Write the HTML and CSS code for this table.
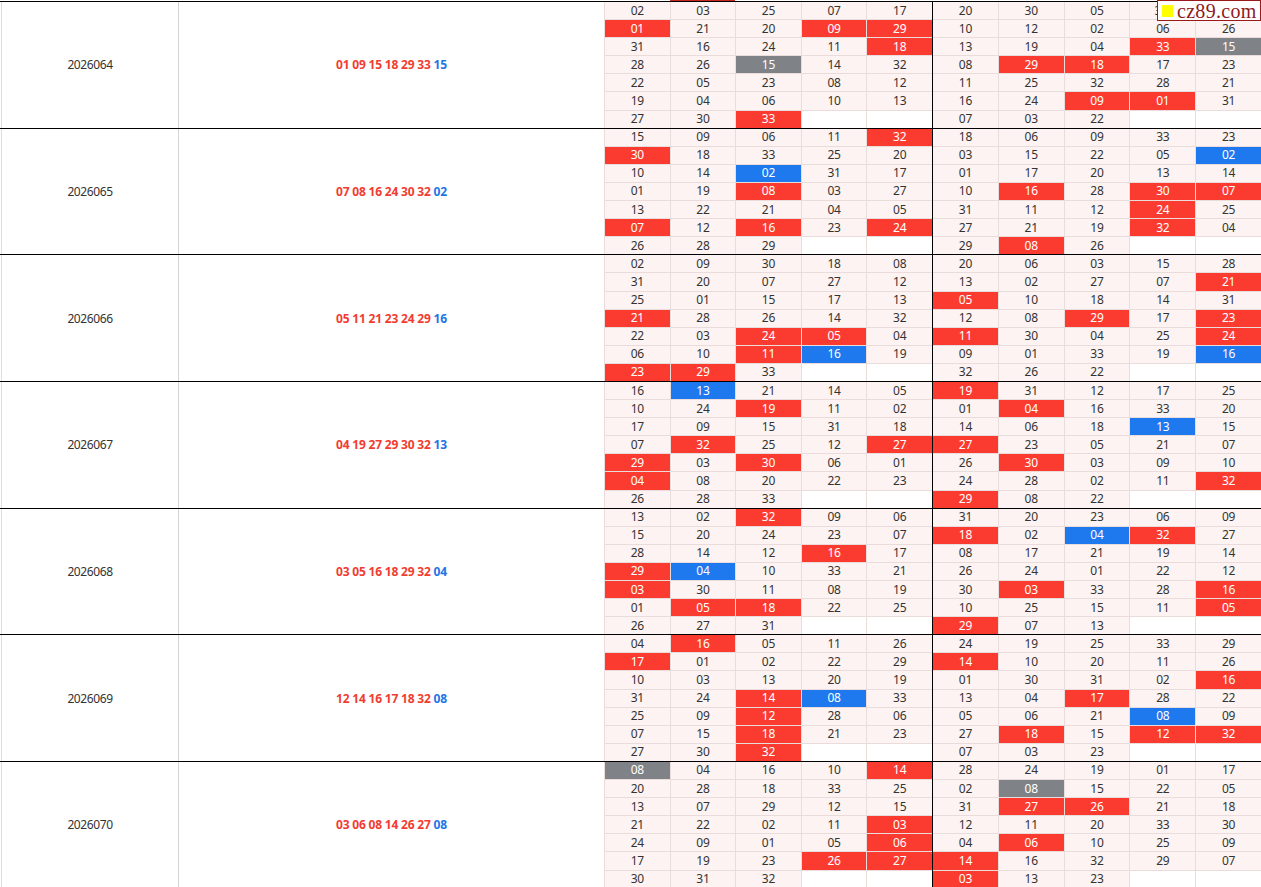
FILE: index.html
```html
<!DOCTYPE html>
<html lang="zh">
<head>
<meta charset="utf-8">
<title>cz89</title>
<link rel="stylesheet" href="styles.css">
</head>
<body>
<div class="wm"><span class="sq"></span><span class="wm-text">cz89.com</span></div>
<div class="table">
  <div class="peek"><span class="peek-gap"></span><span class="peek-red"></span></div>

  <div class="group">
    <div class="issue">2026064</div>
    <div class="draw">01 09 15 18 29 33 <span class="blue">15</span></div>
    <div class="half">
      <span>02</span><span>03</span><span>25</span><span>07</span><span>17</span>
      <span class="r">01</span><span>21</span><span>20</span><span class="r">09</span><span class="r">29</span>
      <span>31</span><span>16</span><span>24</span><span>11</span><span class="r">18</span>
      <span>28</span><span>26</span><span class="g">15</span><span>14</span><span>32</span>
      <span>22</span><span>05</span><span>23</span><span>08</span><span>12</span>
      <span>19</span><span>04</span><span>06</span><span>10</span><span>13</span>
      <span>27</span><span>30</span><span class="r">33</span><span class="e"></span><span class="e"></span>
    </div>
    <div class="half right">
      <span>20</span><span>30</span><span>05</span><span class="under">3</span><span></span>
      <span>10</span><span>12</span><span>02</span><span>06</span><span>26</span>
      <span>13</span><span>19</span><span>04</span><span class="r">33</span><span class="g">15</span>
      <span>08</span><span class="r">29</span><span class="r">18</span><span>17</span><span>23</span>
      <span>11</span><span>25</span><span>32</span><span>28</span><span>21</span>
      <span>16</span><span>24</span><span class="r">09</span><span class="r">01</span><span>31</span>
      <span>07</span><span>03</span><span>22</span><span class="e"></span><span class="e"></span>
    </div>
  </div>

  <div class="group">
    <div class="issue">2026065</div>
    <div class="draw">07 08 16 24 30 32 <span class="blue">02</span></div>
    <div class="half">
      <span>15</span><span>09</span><span>06</span><span>11</span><span class="r">32</span>
      <span class="r">30</span><span>18</span><span>33</span><span>25</span><span>20</span>
      <span>10</span><span>14</span><span class="b">02</span><span>31</span><span>17</span>
      <span>01</span><span>19</span><span class="r">08</span><span>03</span><span>27</span>
      <span>13</span><span>22</span><span>21</span><span>04</span><span>05</span>
      <span class="r">07</span><span>12</span><span class="r">16</span><span>23</span><span class="r">24</span>
      <span>26</span><span>28</span><span>29</span><span class="e"></span><span class="e"></span>
    </div>
    <div class="half right">
      <span>18</span><span>06</span><span>09</span><span>33</span><span>23</span>
      <span>03</span><span>15</span><span>22</span><span>05</span><span class="b">02</span>
      <span>01</span><span>17</span><span>20</span><span>13</span><span>14</span>
      <span>10</span><span class="r">16</span><span>28</span><span class="r">30</span><span class="r">07</span>
      <span>31</span><span>11</span><span>12</span><span class="r">24</span><span>25</span>
      <span>27</span><span>21</span><span>19</span><span class="r">32</span><span>04</span>
      <span>29</span><span class="r">08</span><span>26</span><span class="e"></span><span class="e"></span>
    </div>
  </div>

  <div class="group">
    <div class="issue">2026066</div>
    <div class="draw">05 11 21 23 24 29 <span class="blue">16</span></div>
    <div class="half">
      <span>02</span><span>09</span><span>30</span><span>18</span><span>08</span>
      <span>31</span><span>20</span><span>07</span><span>27</span><span>12</span>
      <span>25</span><span>01</span><span>15</span><span>17</span><span>13</span>
      <span class="r">21</span><span>28</span><span>26</span><span>14</span><span>32</span>
      <span>22</span><span>03</span><span class="r">24</span><span class="r">05</span><span>04</span>
      <span>06</span><span>10</span><span class="r">11</span><span class="b">16</span><span>19</span>
      <span class="r">23</span><span class="r">29</span><span>33</span><span class="e"></span><span class="e"></span>
    </div>
    <div class="half right">
      <span>20</span><span>06</span><span>03</span><span>15</span><span>28</span>
      <span>13</span><span>02</span><span>27</span><span>07</span><span class="r">21</span>
      <span class="r">05</span><span>10</span><span>18</span><span>14</span><span>31</span>
      <span>12</span><span>08</span><span class="r">29</span><span>17</span><span class="r">23</span>
      <span class="r">11</span><span>30</span><span>04</span><span>25</span><span class="r">24</span>
      <span>09</span><span>01</span><span>33</span><span>19</span><span class="b">16</span>
      <span>32</span><span>26</span><span>22</span><span class="e"></span><span class="e"></span>
    </div>
  </div>

  <div class="group">
    <div class="issue">2026067</div>
    <div class="draw">04 19 27 29 30 32 <span class="blue">13</span></div>
    <div class="half">
      <span>16</span><span class="b">13</span><span>21</span><span>14</span><span>05</span>
      <span>10</span><span>24</span><span class="r">19</span><span>11</span><span>02</span>
      <span>17</span><span>09</span><span>15</span><span>31</span><span>18</span>
      <span>07</span><span class="r">32</span><span>25</span><span>12</span><span class="r">27</span>
      <span class="r">29</span><span>03</span><span class="r">30</span><span>06</span><span>01</span>
      <span class="r">04</span><span>08</span><span>20</span><span>22</span><span>23</span>
      <span>26</span><span>28</span><span>33</span><span class="e"></span><span class="e"></span>
    </div>
    <div class="half right">
      <span class="r">19</span><span>31</span><span>12</span><span>17</span><span>25</span>
      <span>01</span><span class="r">04</span><span>16</span><span>33</span><span>20</span>
      <span>14</span><span>06</span><span>18</span><span class="b">13</span><span>15</span>
      <span class="r">27</span><span>23</span><span>05</span><span>21</span><span>07</span>
      <span>26</span><span class="r">30</span><span>03</span><span>09</span><span>10</span>
      <span>24</span><span>28</span><span>02</span><span>11</span><span class="r">32</span>
      <span class="r">29</span><span>08</span><span>22</span><span class="e"></span><span class="e"></span>
    </div>
  </div>

  <div class="group">
    <div class="issue">2026068</div>
    <div class="draw">03 05 16 18 29 32 <span class="blue">04</span></div>
    <div class="half">
      <span>13</span><span>02</span><span class="r">32</span><span>09</span><span>06</span>
      <span>15</span><span>20</span><span>24</span><span>23</span><span>07</span>
      <span>28</span><span>14</span><span>12</span><span class="r">16</span><span>17</span>
      <span class="r">29</span><span class="b">04</span><span>10</span><span>33</span><span>21</span>
      <span class="r">03</span><span>30</span><span>11</span><span>08</span><span>19</span>
      <span>01</span><span class="r">05</span><span class="r">18</span><span>22</span><span>25</span>
      <span>26</span><span>27</span><span>31</span><span class="e"></span><span class="e"></span>
    </div>
    <div class="half right">
      <span>31</span><span>20</span><span>23</span><span>06</span><span>09</span>
      <span class="r">18</span><span>02</span><span class="b">04</span><span class="r">32</span><span>27</span>
      <span>08</span><span>17</span><span>21</span><span>19</span><span>14</span>
      <span>26</span><span>24</span><span>01</span><span>22</span><span>12</span>
      <span>30</span><span class="r">03</span><span>33</span><span>28</span><span class="r">16</span>
      <span>10</span><span>25</span><span>15</span><span>11</span><span class="r">05</span>
      <span class="r">29</span><span>07</span><span>13</span><span class="e"></span><span class="e"></span>
    </div>
  </div>

  <div class="group">
    <div class="issue">2026069</div>
    <div class="draw">12 14 16 17 18 32 <span class="blue">08</span></div>
    <div class="half">
      <span>04</span><span class="r">16</span><span>05</span><span>11</span><span>26</span>
      <span class="r">17</span><span>01</span><span>02</span><span>22</span><span>29</span>
      <span>10</span><span>03</span><span>13</span><span>20</span><span>19</span>
      <span>31</span><span>24</span><span class="r">14</span><span class="b">08</span><span>33</span>
      <span>25</span><span>09</span><span class="r">12</span><span>28</span><span>06</span>
      <span>07</span><span>15</span><span class="r">18</span><span>21</span><span>23</span>
      <span>27</span><span>30</span><span class="r">32</span><span class="e"></span><span class="e"></span>
    </div>
    <div class="half right">
      <span>24</span><span>19</span><span>25</span><span>33</span><span>29</span>
      <span class="r">14</span><span>10</span><span>20</span><span>11</span><span>26</span>
      <span>01</span><span>30</span><span>31</span><span>02</span><span class="r">16</span>
      <span>13</span><span>04</span><span class="r">17</span><span>28</span><span>22</span>
      <span>05</span><span>06</span><span>21</span><span class="b">08</span><span>09</span>
      <span>27</span><span class="r">18</span><span>15</span><span class="r">12</span><span class="r">32</span>
      <span>07</span><span>03</span><span>23</span><span class="e"></span><span class="e"></span>
    </div>
  </div>

  <div class="group">
    <div class="issue">2026070</div>
    <div class="draw">03 06 08 14 26 27 <span class="blue">08</span></div>
    <div class="half">
      <span class="g">08</span><span>04</span><span>16</span><span>10</span><span class="r">14</span>
      <span>20</span><span>28</span><span>18</span><span>33</span><span>25</span>
      <span>13</span><span>07</span><span>29</span><span>12</span><span>15</span>
      <span>21</span><span>22</span><span>02</span><span>11</span><span class="r">03</span>
      <span>24</span><span>09</span><span>01</span><span>05</span><span class="r">06</span>
      <span>17</span><span>19</span><span>23</span><span class="r">26</span><span class="r">27</span>
      <span>30</span><span>31</span><span>32</span><span class="e"></span><span class="e"></span>
    </div>
    <div class="half right">
      <span>28</span><span>24</span><span>19</span><span>01</span><span>17</span>
      <span>02</span><span class="g">08</span><span>15</span><span>22</span><span>05</span>
      <span>31</span><span class="r">27</span><span class="r">26</span><span>21</span><span>18</span>
      <span>12</span><span>11</span><span>20</span><span>33</span><span>30</span>
      <span>04</span><span class="r">06</span><span>10</span><span>25</span><span>09</span>
      <span class="r">14</span><span>16</span><span>32</span><span>29</span><span>07</span>
      <span class="r">03</span><span>13</span><span>23</span><span class="e"></span><span class="e"></span>
    </div>
  </div>
</div>
</body>
</html>
```

FILE: styles.css
```css
html, body {
  margin: 0;
  padding: 0;
  background: #fff;
}
body {
  font-family: "Noto Sans", "Open Sans", sans-serif;
  font-size: 12px;
  color: #333;
  overflow: hidden;
}
.table {
  width: 1261px;
}
.peek {
  display: flex;
  height: 1px;
}
.peek-gap {
  width: 670px;
}
.peek-red {
  width: 65px;
  background: #c8261f;
}
.group {
  display: flex;
  height: 126.67px;
  box-sizing: border-box;
  border-top: 1px solid #000;
}
.issue {
  width: 176px;
  margin-left: 1px;
  border-left: 1px solid #dcdcdc;
  border-right: 1px solid #d4d4d4;
  display: flex;
  align-items: center;
  justify-content: center;
  color: #333;
  letter-spacing: -0.4px;
}
.draw {
  width: 425px;
  display: flex;
  align-items: center;
  justify-content: center;
  font-weight: bold;
  color: #f23c30;
  white-space: pre;
  letter-spacing: -0.2px;
}
.draw .blue {
  color: #1f74e6;
}
.half {
  width: 328px;
  box-sizing: border-box;
  padding-left: 1px;
  display: grid;
  grid-template-columns: repeat(5, 1fr);
  grid-template-rows: repeat(7, 1fr);
  gap: 1px;
  background: #eadcdb;
}
.half.right {
  padding-left: 0;
  border-left: 1px solid #000;
  width: 329px;
}
.half span {
  background: #fdf3f2;
  display: flex;
  align-items: center;
  justify-content: center;
  line-height: 1;
  color: #333;
  letter-spacing: -0.2px;
}
.half span.under {
  justify-content: flex-start;
  padding-left: 24px;
}
.half span.r {
  background: #fb3b30;
  color: #fff;
}
.half span.b {
  background: #1e78ee;
  color: #fff;
}
.half span.g {
  background: #7f8286;
  color: #fff;
}
.half span.e {
  background: #fff;
}
.wm {
  position: absolute;
  top: 0;
  left: 1157px;
  width: 104px;
  height: 21px;
  box-sizing: border-box;
  border: 1px solid #9a1a1a;
  background: #fff;
  display: flex;
  align-items: center;
  gap: 4px;
  padding-left: 4px;
  overflow: hidden;
}
.sq {
  width: 11px;
  height: 12px;
  background: #ffff00;
  flex: none;
}
.wm-text {
  font-family: "Liberation Serif", "DejaVu Serif", serif;
  font-size: 20px;
  line-height: 1;
  color: #8e1b1b;
  letter-spacing: 0.3px;
  white-space: nowrap;
}
```
